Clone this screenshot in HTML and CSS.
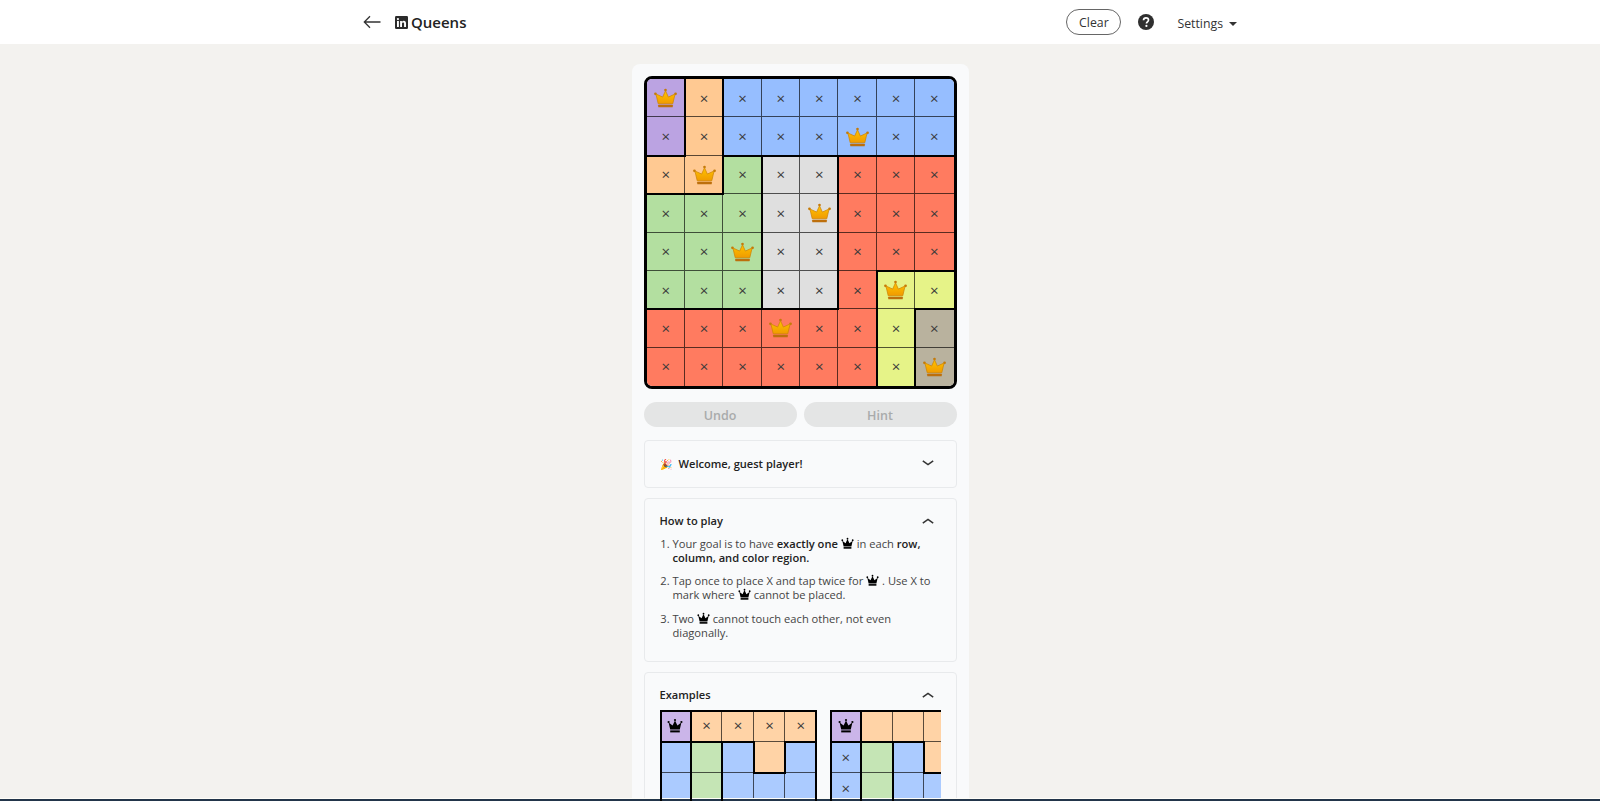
FILE: index.html
```html
<!DOCTYPE html>
<html lang="en">
<head>
  <meta charset="UTF-8" />
  <title>Queens</title>
  <link rel="stylesheet" href="styles.css">
</head>
<body>

  <svg class="sprites" width="0" height="0" aria-hidden="true">
    <defs>
      <linearGradient id="gold" x1="0" y1="0" x2="0" y2="1">
        <stop offset="0" stop-color="#ffc400" />
        <stop offset="1" stop-color="#f09a00" />
      </linearGradient>
      <symbol id="crownGold" viewBox="0 0 24 20">
        <circle cx="12" cy="1.7" r="1.4" fill="#c47a0a" />
        <circle cx="1.5" cy="5.6" r="1.4" fill="#c47a0a" />
        <circle cx="22.5" cy="5.6" r="1.4" fill="#c47a0a" />
        <path d="M12 2.5 15 9 22 5.8 19.6 16H4.4L2 5.8 9 9Z" fill="url(#gold)" stroke="#cf8606" stroke-width=".8" stroke-linejoin="round" />
        <rect x="4.4" y="17" width="15.2" height="2.6" rx=".6" fill="#bd6f0c" />
      </symbol>
      <symbol id="crownBlack" viewBox="0 0 16 16">
        <circle cx="8" cy="2" r="1.1" />
        <circle cx="1.6" cy="4" r="1.1" />
        <circle cx="14.4" cy="4" r="1.1" />
        <path d="M8 2.5 10.4 7.6 14.4 4.6 12.8 11.6H3.2L1.6 4.6 5.6 7.6Z" />
        <rect x="3.2" y="12.4" width="9.6" height="2" />
      </symbol>
    </defs>
  </svg>

  <header class="topbar">
    <div class="topbar-inner">
      <div class="topbar-left">
        <svg class="back-icon" viewBox="0 0 18 14" width="18" height="14">
          <path d="M17.5 7H1.5M7 1.2 1.3 7 7 12.8" fill="none" stroke="#333" stroke-width="1.3" />
        </svg>
        <svg class="in-logo" viewBox="0 0 13 13" width="13" height="13">
          <rect width="13" height="13" rx="1.2" fill="#2b2b2b" />
          <rect x="2" y="5" width="1.9" height="6" fill="#fff" />
          <circle cx="2.95" cy="3.1" r="1.1" fill="#fff" />
          <path d="M5.1 5h1.8v.9c.4-.7 1.1-1.05 1.9-1.05 1.5 0 2.2.9 2.2 2.6V11H9.1V7.8c0-.8-.3-1.3-1-1.3s-1.1.5-1.1 1.3V11H5.1Z" fill="#fff" />
        </svg>
        <h1 class="game-title">Queens</h1>
      </div>
      <div class="topbar-right">
        <button class="clear-btn">Clear</button>
        <svg class="help-icon" viewBox="0 0 16 16" width="16" height="16">
          <circle cx="8" cy="8" r="8" fill="#2f2f2f" />
          <path d="M5.5 6.2C5.6 4.7 6.6 3.9 8 3.9c1.5 0 2.5.9 2.5 2.1 0 1-.6 1.5-1.2 2-.6.4-.8.7-.8 1.4" fill="none" stroke="#fff" stroke-width="1.7" />
          <circle cx="8.4" cy="11.9" r="1.1" fill="#fff" />
        </svg>
        <span class="settings">Settings<i class="caret"></i></span>
      </div>
    </div>
  </header>

  <main class="game-card">
    <div class="board" id="mainBoard"></div>

    <div class="actions">
      <button class="action-btn">Undo</button>
      <button class="action-btn">Hint</button>
    </div>

    <section class="panel panel-welcome">
      <div class="panel-head">
        <span class="panel-title"><span class="party">🎉</span>Welcome, guest player!</span>
        <svg class="chevron" viewBox="0 0 12 6" width="12" height="6"><path d="M.8.8 6 4.6 11.2.8" fill="none" stroke="#333" stroke-width="1.5" /></svg>
      </div>
    </section>

    <section class="panel">
      <div class="panel-head">
        <span class="panel-title">How to play</span>
        <svg class="chevron" viewBox="0 0 12 6" width="12" height="6"><path d="M.8 5.2 6 1.4l5.2 3.8" fill="none" stroke="#333" stroke-width="1.5" /></svg>
      </div>
      <ol class="rules">
        <li>Your goal is to have <b>exactly one</b> <svg class="crown-inline"><use href="#crownBlack" /></svg> in each <b>row, column, and color region.</b></li>
        <li>Tap once to place X and tap twice for <svg class="crown-inline"><use href="#crownBlack" /></svg> . Use X to mark where <svg class="crown-inline"><use href="#crownBlack" /></svg> cannot be placed.</li>
        <li>Two <svg class="crown-inline"><use href="#crownBlack" /></svg> cannot touch each other, not even diagonally.</li>
      </ol>
    </section>

    <section class="panel">
      <div class="panel-head">
        <span class="panel-title">Examples</span>
        <svg class="chevron" viewBox="0 0 12 6" width="12" height="6"><path d="M.8 5.2 6 1.4l5.2 3.8" fill="none" stroke="#333" stroke-width="1.5" /></svg>
      </div>
      <div class="examples">
        <div class="board board-mini" id="exampleOne"></div>
        <div class="board board-mini" id="exampleTwo"></div>
      </div>
    </section>
  </main>

  <div class="bottom-line"></div>

  <script src="board.js"></script>
</body>
</html>
```

FILE: styles.css
```css
html, body {
  height: 100%;
  overflow: hidden;
}
body {
  margin: 0;
  background: #f3f2ef;
  color: #1f1f1f;
  font-family: "Open Sans", "Noto Sans", Arial, sans-serif;
}
.sprites {
  position: absolute;
}
button {
  font-family: inherit;
}

/* barra do topo */
.topbar {
  height: 44px;
  background: #fff;
}
.topbar-inner {
  width: 874px;
  height: 100%;
  margin: 0 auto;
  display: flex;
  justify-content: space-between;
  align-items: center;
}
.topbar-left, .topbar-right {
  display: flex;
  align-items: center;
}
.back-icon {
  margin-right: 14px;
}
.in-logo {
  margin-right: 3px;
}
.game-title {
  margin: 0;
  font-size: 15px;
  font-weight: 600;
  color: #222;
}
.clear-btn {
  width: 55px;
  height: 26px;
  padding: 0;
  margin-right: 17px;
  background: #fff;
  border: 1px solid #666;
  border-radius: 13px;
  font-size: 12.3px;
  font-weight: 500;
  color: #333;
}
.help-icon {
  margin-right: 23px;
}
.settings {
  padding-top: 2px;
  font-size: 12.3px;
  font-weight: 500;
  color: #333;
}
.caret {
  display: inline-block;
  margin-left: 6px;
  vertical-align: 2px;
  border-left: 4px solid transparent;
  border-right: 4px solid transparent;
  border-top: 4px solid #333;
}

/* cartao central */
.game-card {
  width: 337px;
  margin: 20px auto 0;
  padding: 12px;
  box-sizing: border-box;
  background: #f9fafb;
  border-radius: 8px 8px 0 0;
}

/* tabuleiro */
.board {
  display: grid;
  grid-template-columns: repeat(8, 1fr);
  border: 3px solid #000;
  border-radius: 8px;
  overflow: hidden;
}
.cell {
  aspect-ratio: 1;
  display: flex;
  justify-content: center;
  align-items: center;
  position: relative;
  font-size: 15px;
  line-height: 1;
  color: #3a3a3a;
  box-shadow: inset -1px -1px 0 rgba(0, 0, 0, .65);
}
#mainBoard .cell:nth-child(8n) {
  box-shadow: inset 0 -1px 0 rgba(0, 0, 0, .65);
}
#mainBoard .cell:nth-last-child(-n+8) {
  box-shadow: inset -1px 0 0 rgba(0, 0, 0, .65);
}
#mainBoard .cell:last-child {
  box-shadow: none;
}
/* linhas grossas entre regioes */
.cell.line-right::after, .cell.line-bottom::before {
  content: "";
  position: absolute;
  background: #000;
  z-index: 1;
}
.cell.line-right::after {
  top: -1px;
  bottom: -1px;
  right: -1px;
  width: 2px;
}
.cell.line-bottom::before {
  left: -1px;
  right: -1px;
  bottom: -1px;
  height: 2px;
}
.crown-gold {
  width: 23px;
  height: 20px;
}
.purple { background: #bba3e2; }
.orange { background: #ffc992; }
.blue { background: #96beff; }
.green { background: #b3dfa0; }
.gray { background: #dfdfdf; }
.red { background: #ff7b60; }
.yellow { background: #e6f388; }
.tan { background: #b9b29e; }

/* botoes desabilitados */
.actions {
  display: flex;
  gap: 7px;
  margin: 13px 0;
}
.action-btn {
  flex: 1;
  height: 25px;
  padding: 1px 0 0;
  background: #e4e5e5;
  border: none;
  border-radius: 13px;
  font-size: 12.5px;
  font-weight: 600;
  color: #a9abab;
}

/* paineis */
.panel {
  margin-bottom: 10px;
  padding: 14px 15px 15px;
  background: #f9fafb;
  border: 1px solid #e8eaec;
  border-radius: 4px;
}
.panel-welcome {
  height: 48px;
  box-sizing: border-box;
  padding: 0 15px 2px;
  display: flex;
  flex-direction: column;
  justify-content: center;
}
.panel-head {
  display: flex;
  justify-content: space-between;
  align-items: center;
  padding-right: 7px;
}
.panel-title {
  font-size: 11.1px;
  font-weight: 600;
  color: #222;
}
.party {
  margin-right: 7px;
  font-size: 10px;
}
.rules {
  margin: 9px 0 0;
  padding-left: 13px;
  font-size: 11.15px;
  line-height: 13.7px;
  color: #444;
}
.rules li {
  margin-bottom: 10px;
}
.rules li:last-child {
  margin-bottom: 0;
  padding-bottom: 7px;
}
.rules b {
  font-weight: 600;
  color: #222;
}
.crown-inline {
  width: 13px;
  height: 13px;
  margin: -4px 0;
  vertical-align: 2px;
}

/* exemplos */
.examples {
  display: flex;
  gap: 13.5px;
  margin-top: 8px;
  overflow: hidden;
}
.board-mini {
  flex: none;
  width: 157px;
  position: relative;
  border: none;
  border-radius: 0;
  grid-template-columns: repeat(5, 1fr);
}
/* borda por cima das celulas, sem roubar largura delas */
.board-mini::after {
  content: "";
  position: absolute;
  inset: 0;
  border: 2px solid #000;
  z-index: 2;
}
.board-mini .purple { background: #cbb5e9; }
.board-mini .orange { background: #ffd3a6; }
.board-mini .blue { background: #abcbff; }
.board-mini .green { background: #c5e5b5; }
.board-mini .crown-inline {
  width: 16px;
  height: 16px;
  margin: 0;
  vertical-align: 0;
}

.bottom-line {
  position: fixed;
  left: 0;
  right: 0;
  bottom: 0;
  height: 2px;
  background: #22354a;
  border-top: 1px solid #fffef8;
}
```

FILE: board.js
```js
// P roxo, O laranja, B azul, G verde, W cinza, R vermelho, Y amarelo, T marrom
const cores = { P: 'purple', O: 'orange', B: 'blue', G: 'green', W: 'gray', R: 'red', Y: 'yellow', T: 'tan' };

// Desenha um tabuleiro: crowns e xs guardam "linha,coluna" de cada marca
function desenharBoard(id, grid, crowns, xs, crownId) {
  const board = document.getElementById(id);
  grid.forEach((row, r) => {
    [...row].forEach((c, col) => {
      const cell = document.createElement('div');
      cell.className = 'cell ' + cores[c];
      if (col < row.length - 1 && row[col + 1] !== c) cell.classList.add('line-right');
      if (r < grid.length - 1 && grid[r + 1][col] !== c) cell.classList.add('line-bottom');

      const pos = r + ',' + col;
      if (crowns.includes(pos)) {
        const cls = crownId === 'crownGold' ? 'crown-gold' : 'crown-inline';
        cell.innerHTML = '<svg class="' + cls + '"><use href="#' + crownId + '" /></svg>';
      } else if (xs === 'all' || xs.includes(pos)) {
        cell.textContent = '×';
      }
      board.appendChild(cell);
    });
  });
}

desenharBoard('mainBoard', [
  'POBBBBBB',
  'POBBBBBB',
  'OOGWWRRR',
  'GGGWWRRR',
  'GGGWWRRR',
  'GGGWWRYY',
  'RRRRRRYT',
  'RRRRRRYT'
], ['0,0', '1,5', '2,1', '3,4', '4,2', '5,6', '6,3', '7,7'], 'all', 'crownGold');

desenharBoard('exampleOne', [
  'POOOO',
  'BGBOB',
  'BGBBB'
], ['0,0'], ['0,1', '0,2', '0,3', '0,4'], 'crownBlack');

desenharBoard('exampleTwo', [
  'POOOO',
  'BGBOB',
  'BGBBB'
], ['0,0'], ['1,0', '2,0'], 'crownBlack');
```
